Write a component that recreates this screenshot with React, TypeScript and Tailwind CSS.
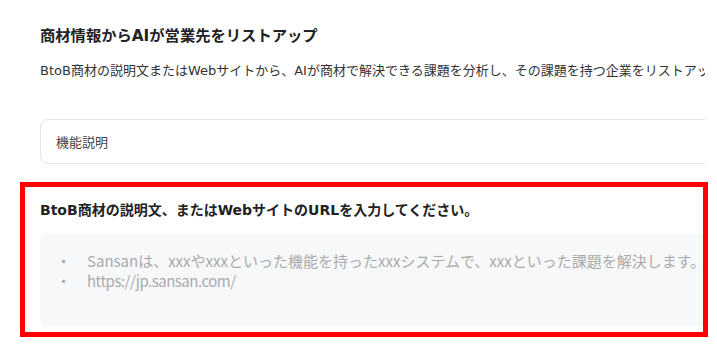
import React from 'react';

const latinFirst = { fontFamily: '"DejaVu Sans", "Noto Sans CJK JP", sans-serif' };

const App: React.FC = () => {
  return (
    <div className="relative w-[717px] h-[350px] bg-white overflow-hidden" style={{ fontFamily: '"Noto Sans CJK JP", "Noto Sans", sans-serif' }}>
      <div className="w-[705px] overflow-hidden">
        <div className="w-[820px] pl-[40px] pt-[25px]">
          <h1 className="text-[15.3px] leading-[22px] font-bold text-[#222]" style={latinFirst}>
            商材情報からAIが営業先をリストアップ
          </h1>
          <p className="mt-[14px] text-[13px] leading-[20px] text-[#333] whitespace-nowrap" style={latinFirst}>
            BtoB商材の説明文またはWebサイトから、AIが商材で解決できる課題を分析し、その課題を持つ企業をリストアップします。
          </p>

          <div className="mt-[38px] h-[45px] flex items-center border border-[#e3e3e3] rounded-[8px] pl-[15px]">
            <span className="text-[13px] text-[#444]">機能説明</span>
          </div>

          <div className="mt-[36px] text-[14px] leading-[20px] font-bold text-[#222]" style={latinFirst}>
            BtoB商材の説明文、またはWebサイトのURLを入力してください。
          </div>

          <div className="mt-[14px] h-[92px] bg-[#f7f8fa] rounded-[6px] pl-[16px] pt-[17px] text-[15px] leading-[20px] text-[#aaaaaa]">
            <div className="flex whitespace-nowrap">
              <span className="w-[31px]">・</span>
              <span>Sansanは、xxxやxxxといった機能を持ったxxxシステムで、xxxといった課題を解決します。</span>
            </div>
            <div className="flex whitespace-nowrap">
              <span className="w-[31px]">・</span>
              <span className="tracking-[-0.5px]">https://jp.sansan.com/</span>
            </div>
          </div>
        </div>
      </div>

      {/* annotation frame */}
      <div className="absolute left-[20px] top-[182px] w-[688px] h-[155px] border-[5px] border-[#ff0000] pointer-events-none" />
    </div>
  );
};

export default App;
